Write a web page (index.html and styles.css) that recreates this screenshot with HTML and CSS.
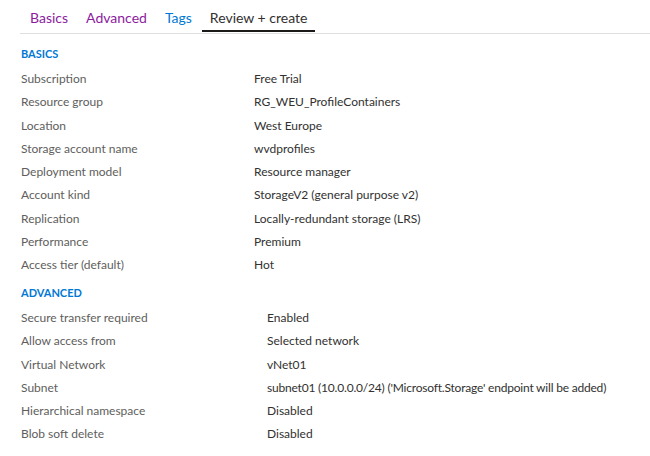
FILE: index.html
```html
<!DOCTYPE html>
<html lang="en">
<head>
<meta charset="utf-8">
<title>Review + create</title>
<link rel="stylesheet" href="styles.css">
</head>
<body>
<div class="page">
  <nav class="tabs">
    <a class="tab visited">Basics</a>
    <a class="tab visited">Advanced</a>
    <a class="tab link">Tags</a>
    <a class="tab active">Review + create</a>
  </nav>

  <section class="section basics">
    <h2 class="section-title">BASICS</h2>
    <dl class="props">
      <dt>Subscription</dt><dd>Free Trial</dd>
      <dt>Resource group</dt><dd>RG_WEU_ProfileContainers</dd>
      <dt>Location</dt><dd>West Europe</dd>
      <dt>Storage account name</dt><dd>wvdprofiles</dd>
      <dt>Deployment model</dt><dd>Resource manager</dd>
      <dt>Account kind</dt><dd>StorageV2 (general purpose v2)</dd>
      <dt>Replication</dt><dd>Locally-redundant storage (LRS)</dd>
      <dt>Performance</dt><dd>Premium</dd>
      <dt>Access tier (default)</dt><dd>Hot</dd>
    </dl>
  </section>

  <section class="section advanced">
    <h2 class="section-title">ADVANCED</h2>
    <dl class="props">
      <dt>Secure transfer required</dt><dd>Enabled</dd>
      <dt>Allow access from</dt><dd>Selected network</dd>
      <dt>Virtual Network</dt><dd>vNet01</dd>
      <dt>Subnet</dt><dd>subnet01 (10.0.0.0/24) ('Microsoft.Storage' endpoint will be added)</dd>
      <dt>Hierarchical namespace</dt><dd>Disabled</dd>
      <dt>Blob soft delete</dt><dd>Disabled</dd>
    </dl>
  </section>
</div>
</body>
</html>
```

FILE: styles.css
```css
html, body {
  margin: 0;
  padding: 0;
  background: #ffffff;
}

body {
  font-family: Lato, "Noto Sans", "Liberation Sans", sans-serif;
  color: #323130;
  font-size: 12px;
}

.page {
  padding-left: 20px;
}

.tabs {
  display: flex;
  gap: 2px;
  padding-left: 2px;
  border-bottom: 1px solid #e1dfdd;
  padding-bottom: 1px;
}

.tab {
  font-size: 14px;
  line-height: 20px;
  padding: 8px 8px 2px;
  border-bottom: 2px solid transparent;
  cursor: pointer;
}

.tab.visited { color: #8c1b9e; }
.tab.link { color: #0078d4; }
.tab.active {
  color: #323130;
  border-bottom-color: #1b1a19;
}

.section-title {
  margin: 0;
  font-size: 11px;
  line-height: 16px;
  font-weight: 700;
  color: #0078d4;
  padding-left: 1px;
}

.basics {
  margin-top: 12px;
}
.basics .section-title { margin-bottom: 5px; }

.advanced {
  margin-top: 9px;
}
.advanced .section-title { margin-bottom: 5px; }

.props {
  margin: 0;
  display: grid;
  grid-template-columns: 234px 1fr;
  line-height: 23.25px;
}

.advanced .props {
  grid-template-columns: 247px 1fr;
  line-height: 23.2px;
}

.props dt {
  color: #605e5c;
  padding-left: 1px;
  white-space: nowrap;
}

.props dd {
  margin: 0;
  color: #323130;
  white-space: nowrap;
}

.advanced .props dd:nth-of-type(4) {
  letter-spacing: -0.2px;
}
```
